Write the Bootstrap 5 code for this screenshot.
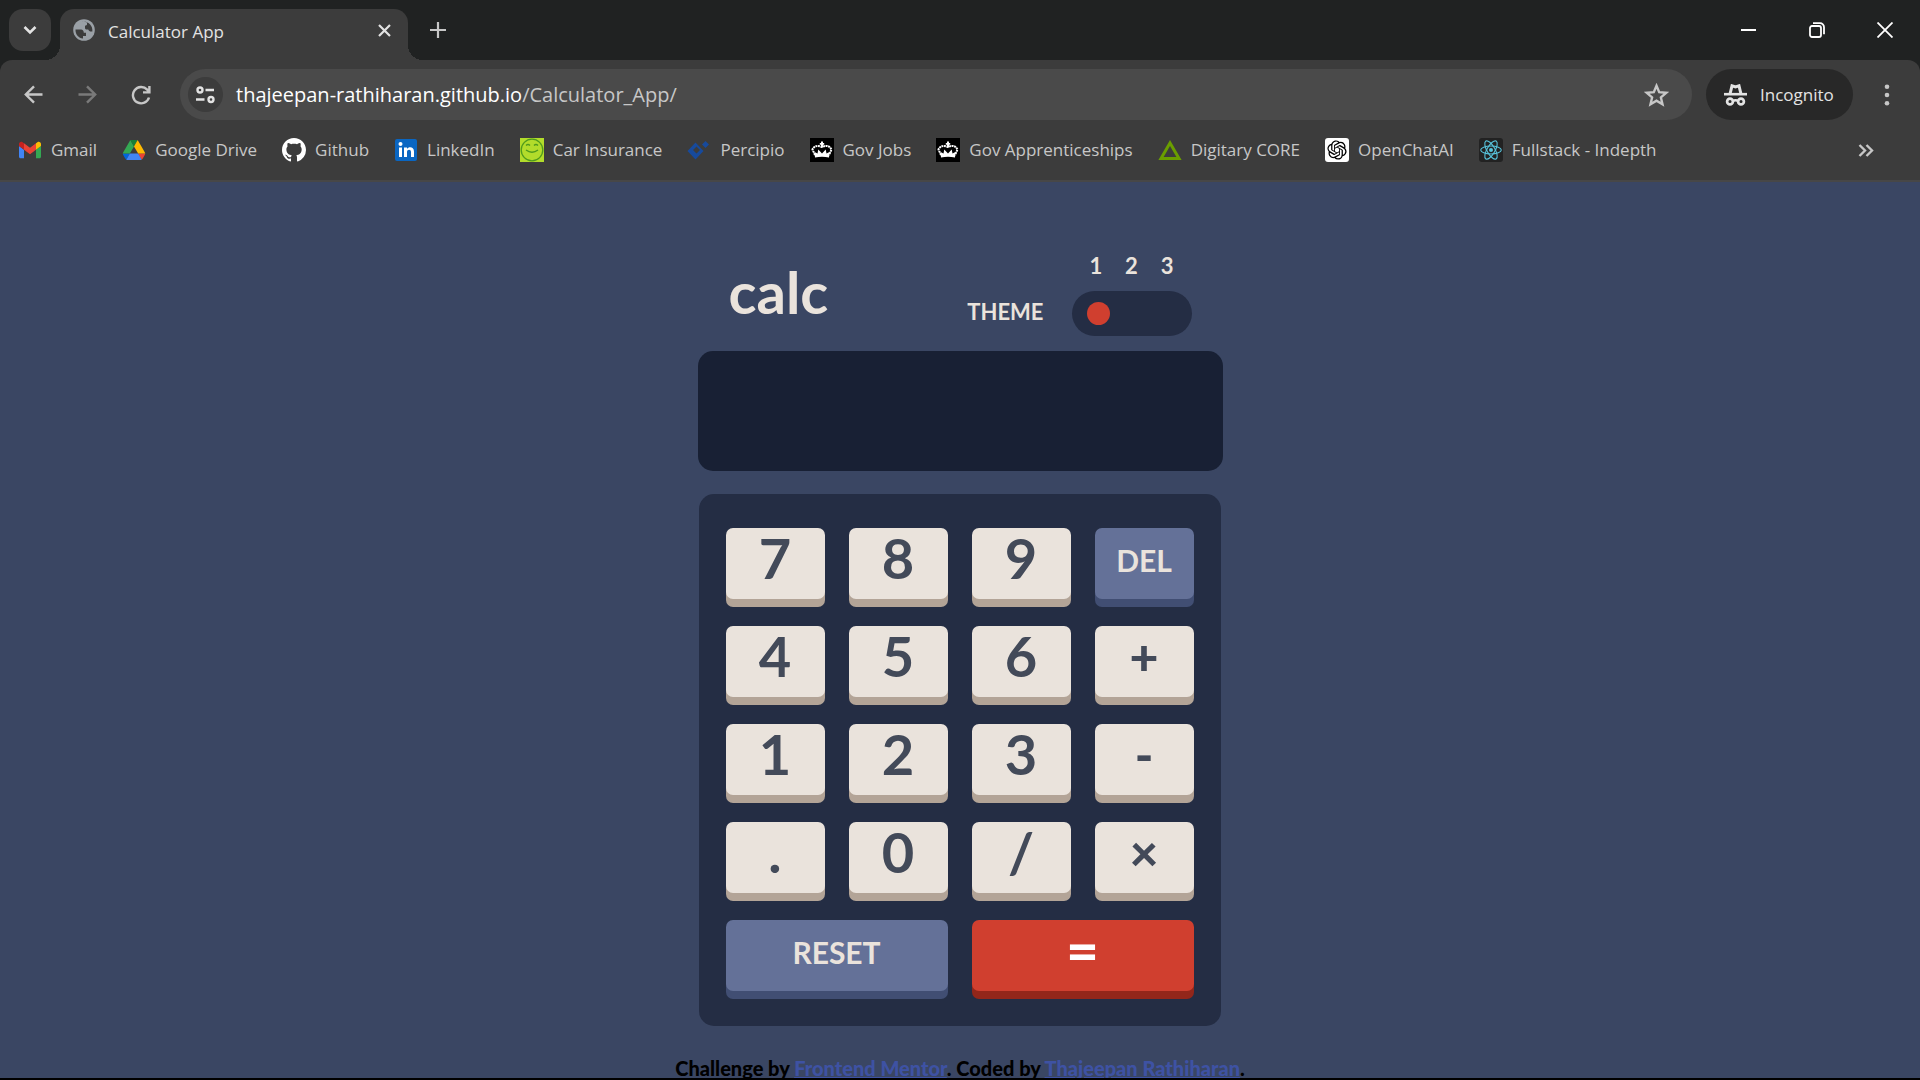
<!DOCTYPE html>
<html lang="en">
<head>
<meta charset="utf-8">
<meta name="viewport" content="width=device-width, initial-scale=1">
<title>Calculator App</title>
<link href="https://cdn.jsdelivr.net/npm/bootstrap@5.3.0/dist/css/bootstrap.min.css" rel="stylesheet">
<style>
  :root { --strip: #202222; --bar: #3c3c3c; --page: #3a4663; --pad: #242d44; --cream: #eae3dc; --slate: #434a59; }
  body { background: var(--page); font-family: "Open Sans", "Noto Sans", sans-serif; font-size: 17px; line-height: 24px; }
  svg { display: block; flex: none; }
  .plain-btn { background: none; border: 0; padding: 0; color: #c7c7c7; display: grid; place-items: center; flex: none; }

  /* tab strip */
  .tab-strip { background: var(--strip); height: 60px; padding: 9px 1px 0 9px; }
  .tab-search { width: 42px; height: 42px; border-radius: 14px; background: var(--bar); color: #e3e3e3; }
  .page-tab { position: relative; width: 348px; height: 51px; margin-left: 9px; padding: 0 16px 9px 13px; gap: 13px; background: var(--bar); border-radius: 14px 14px 0 0; color: #e3e3e3; }
  .page-tab::before, .page-tab::after { content: ""; position: absolute; bottom: 0; width: 15px; height: 15px; }
  .page-tab::before { right: 100%; background: radial-gradient(circle at 0 0, transparent 15px, var(--bar) 15px); }
  .page-tab::after { left: 100%; background: radial-gradient(circle at 100% 0, transparent 15px, var(--bar) 15px); }
  .tab-name { padding-top: 3px; }
  .new-tab { width: 42px; height: 42px; margin-left: 9px; }
  .win-btn { width: 68px; height: 42px; color: #fff; }

  /* toolbar */
  .bar-wrap { background: var(--strip); }
  .tool-bar { background: var(--bar); border-radius: 12px 12px 0 0; height: 60px; padding: 9px 0 0 6px; }
  .nav-btn { width: 54px; height: 51px; }
  .omnibox { height: 51px; margin-left: 12px; padding: 0 23px 0 8px; border-radius: 26px; background: #4a4a4a; }
  .site-info { width: 35px; height: 35px; border-radius: 50%; background: var(--bar); color: #e3e3e3; }
  .url-text { font-size: 20px; color: #c7c7c7; margin-left: 13px; }
  .url-text b { font-weight: 400; color: #fff; }
  .incog { height: 51px; width: 147px; margin-left: 14px; border-radius: 26px; background: #282828; color: #e3e3e3; padding-left: 18px; gap: 13px; }
  .menu-btn { width: 67px; height: 51px; }

  /* bookmarks */
  .bookmarks { background: var(--bar); height: 62px; padding: 0 46px 0 18px; gap: 25px; border-bottom: 2px solid #474747; }
  .bookmarks a { display: flex; align-items: center; gap: 9px; color: #c7c7c7; text-decoration: none; white-space: nowrap; }

  /* calculator */
  .calc-page { font-family: Lato, "Open Sans", sans-serif; font-weight: 700; padding-top: 72px; border-bottom: 2px solid #000; }
  .calc-box { width: 525px; }
  .calc-head { padding: 0 31px 15px; color: var(--cream); }
  .calc-title { font-size: 58px; line-height: 64px; font-weight: 700; margin: 0 0 12px; }
  .theme-word { font-size: 22px; line-height: 24px; margin: 0 28px 12px 0; }
  .theme-nums { font-size: 22px; line-height: 24px; padding: 0 18px; margin-bottom: 13px; }
  .theme-range { appearance: none; display: block; width: 120px; height: 45px; margin: 0; padding: 0 15px; border-radius: 23px; background: var(--pad); }
  .theme-range::-webkit-slider-thumb { appearance: none; width: 23px; height: 23px; border-radius: 50%; background: #d03f2f; }
  .calc-screen { display: block; width: 100%; height: 120px; border: 0; border-radius: 15px; background: #182034; color: #fff; padding: 0 30px; font-size: 56px; text-align: right; }
  .keypad { margin: 23px 2px 0 1px; padding: 34px 27px 35px; border-radius: 15px; background: var(--pad); display: grid; grid-template-columns: repeat(4, 1fr); gap: 27px 24px; }
  .key { height: 71px; padding: 0 0 11px; border: 0; border-radius: 7px; background: var(--cream); box-shadow: 0 8px 0 #b3a497; color: var(--slate); font-size: 56px; line-height: 60px; font-weight: 700; }
  .key-op { font-size: 50px; font-weight: 900; }
  .key-word { background: #647198; box-shadow: 0 8px 0 #414e73; color: var(--cream); font-size: 30px; line-height: 64px; padding-bottom: 7px; }
  .key-eq { background: #d03f2f; box-shadow: 0 8px 0 #93261a; color: #fff; font-weight: 900; }
  .key-wide { grid-column: span 2; }
  .credit { font-size: 20px; line-height: 24px; font-weight: 900; color: #000; margin-top: 30px; }
  .credit a { color: #3e52a3; }
</style>
<script src="https://cdn.jsdelivr.net/npm/bootstrap@5.3.0/dist/js/bootstrap.bundle.min.js"></script>
</head>
<body class="vh-100 d-flex flex-column overflow-hidden">

<header class="flex-shrink-0">
  <div class="tab-strip d-flex align-items-start">
    <button class="plain-btn tab-search" aria-label="Search tabs"><svg width="14" height="10" viewBox="0 0 14 10" fill="none" stroke="currentColor" stroke-width="2.6"><path d="M1.5 2 7 7.5 12.500 2"/></svg></button>
    <div class="page-tab d-flex align-items-center">
      <svg width="22" height="22" viewBox="0 0 22 22"><circle cx="11" cy="11" r="10.800" fill="#9aa0a6"/><path fill="#3c3c3c" d="M2.500 10.500h5.500c1.800 0 2.800 1.500 2.800 3.200h2.200v3.300h-3v2.500C5.600 19.200 2.300 15.500 2.500 10.500zM9 3c3-.8 5 0 5 0v2.200c0 1-1 1.400-2 1.500v2.200c0 1 1 1.600 2 1.600h1.200c.5 1.400 2 2.500 4.200 2 .6-6-4.400-10.500-10.400-9.500z"/></svg>
      <span class="tab-name">Calculator App</span>
      <button class="plain-btn ms-auto" aria-label="Close tab"><svg width="15" height="15" viewBox="0 0 15 15" stroke="#e3e3e3" stroke-width="2.2"><path d="m2 2 11 11M13 2 2 13"/></svg></button>
    </div>
    <button class="plain-btn new-tab" aria-label="New tab"><svg width="16" height="16" viewBox="0 0 16 16" stroke="currentColor" stroke-width="2.2"><path d="M8 0v16M0 8h16"/></svg></button>
    <div class="d-flex ms-auto">
      <button class="plain-btn win-btn" aria-label="Minimize"><svg width="16" height="16" viewBox="0 0 16 16" stroke="currentColor" stroke-width="2"><path d="M0 8h15"/></svg></button>
      <button class="plain-btn win-btn" aria-label="Restore"><svg width="16" height="16" viewBox="0 0 16 16" fill="none" stroke="currentColor" stroke-width="1.800"><rect x="1" y="4" width="11" height="11" rx="2"/><path d="M4 1.200h7a4 4 0 0 1 4 4v7"/></svg></button>
      <button class="plain-btn win-btn" aria-label="Close"><svg width="16" height="16" viewBox="0 0 16 16" stroke="currentColor" stroke-width="1.800"><path d="m.5.5 15 15M15.500.5l-15 15"/></svg></button>
    </div>
  </div>

  <div class="bar-wrap">
    <div class="tool-bar d-flex align-items-center">
      <button class="plain-btn nav-btn" aria-label="Back"><svg width="19" height="19" viewBox="0 0 19 19" fill="none" stroke="currentColor" stroke-width="2.400"><path d="M18.500 9.500H2M10 1.300 1.800 9.500 10 17.700"/></svg></button>
      <button class="plain-btn nav-btn" aria-label="Forward"><svg width="19" height="19" viewBox="0 0 19 19" fill="none" stroke="#7a7a7a" stroke-width="2.400"><path d="M.5 9.500H17M9 1.300l8.200 8.200L9 17.700"/></svg></button>
      <button class="plain-btn nav-btn" aria-label="Reload"><svg width="20" height="20" viewBox="0 0 20 20" fill="none" stroke="currentColor" stroke-width="2.400"><path d="M18 12.500A8.200 8.200 0 1 1 16.200 4.600L18.400 7M18.400 1v6.400H12"/></svg></button>
      <div class="omnibox d-flex align-items-center flex-grow-1">
        <button class="plain-btn site-info" aria-label="Site information"><svg width="19" height="18" viewBox="0 0 19 18" fill="none" stroke="currentColor" stroke-width="2.400"><circle cx="4" cy="4" r="2.500"/><path d="M9.500 4H18M0 13.500h8.500"/><circle cx="15" cy="13.500" r="2.500"/></svg></button>
        <span class="url-text"><b>thajeepan-rathiharan.github.io</b>/Calculator_App/</span>
        <button class="plain-btn ms-auto" aria-label="Bookmark this page"><svg width="25" height="24" viewBox="0 0 25 24" fill="none" stroke="currentColor" stroke-width="2.400"><path d="m12.500 2.800 2.700 6.400 7 .6-5.300 4.600 1.600 6.800-6-3.600-6 3.600 1.600-6.800-5.300-4.600 7-.6z"/></svg></button>
      </div>
      <div class="incog d-flex align-items-center">
        <svg width="23" height="22" viewBox="0 0 23 22" fill="none" stroke="currentColor"><path d="M0 10.200h23" stroke-width="2.600"/><path d="M6 10 8 1.800l3.500 1.200L15 1.800 17 10" stroke-width="3"/><circle cx="6" cy="17.500" r="2.900" stroke-width="2.700"/><circle cx="17" cy="17.500" r="2.900" stroke-width="2.700"/><path d="M8.500 17q3-1.500 6 0" stroke-width="2.600"/></svg>
        <span>Incognito</span>
      </div>
      <button class="plain-btn menu-btn" aria-label="Menu"><svg width="6" height="22" viewBox="0 0 6 22" fill="currentColor"><circle cx="3" cy="2.800" r="2.300"/><circle cx="3" cy="11" r="2.300"/><circle cx="3" cy="19.200" r="2.300"/></svg></button>
    </div>
  </div>

  <nav class="bookmarks d-flex align-items-center" aria-label="Bookmarks">
    <a href="#"><svg width="24" height="18" viewBox="48 42 96 66"><path fill="#4285f4" d="M58 108h14V74L52 59v43c0 3.320 2.690 6 6 6"/><path fill="#34a853" d="M120 108h14c3.320 0 6-2.690 6-6V59l-20 15"/><path fill="#fbbc04" d="M120 48v26l20-15v-8c0-7.420-8.470-11.650-14.400-7.200"/><path fill="#ea4335" d="M72 74V48l24 18 24-18v26L96 92"/><path fill="#c5221f" d="M52 51v8l20 15V48l-5.600-4.200c-5.940-4.450-14.400-.22-14.400 7.200"/></svg>Gmail</a>
    <a href="#"><svg width="24" height="20" viewBox="-2 0 91.300 78"><path fill="#0066da" d="m6.600 66.850 3.850 6.650c.8 1.400 1.950 2.500 3.300 3.300l13.750-23.800H0c0 1.550.4 3.100 1.200 4.500z"/><path fill="#34a853" d="M43.650 25 29.900 1.200c-1.350.8-2.500 1.900-3.300 3.300l-25.400 44A9.060 9.060 0 0 0 0 53h27.500z"/><path fill="#ea4335" d="M73.550 76.800c1.350-.8 2.500-1.900 3.300-3.300l1.600-2.750 7.650-13.250c.8-1.400 1.200-2.950 1.200-4.500H59.800l5.850 11.500z"/><path fill="#188038" d="M43.650 25 57.400 1.200C56.050.4 54.500 0 52.900 0H34.400c-1.600 0-3.150.45-4.500 1.200z"/><path fill="#4285f4" d="M59.800 53H27.500L13.750 76.800c1.350.8 2.900 1.200 4.500 1.200h50.800c1.600 0 3.150-.45 4.500-1.200z"/><path fill="#ffba00" d="m73.400 26.500-12.700-22c-.8-1.400-1.950-2.500-3.300-3.300L43.650 25l16.150 28h27.450c0-1.550-.4-3.100-1.200-4.500z"/></svg>Google Drive</a>
    <a href="#"><svg width="24" height="24" viewBox="0 0 16 16" fill="#fff"><path d="M8 0C3.580 0 0 3.580 0 8c0 3.540 2.290 6.530 5.470 7.590.4.070.55-.17.55-.38 0-.19-.01-.82-.01-1.490-2.010.37-2.530-.49-2.690-.94-.09-.23-.48-.94-.82-1.130-.28-.15-.68-.52-.01-.53.63-.01 1.080.58 1.230.82.72 1.210 1.870.87 2.330.66.07-.52.28-.87.51-1.070-1.780-.2-3.640-.89-3.640-3.950 0-.87.31-1.590.82-2.150-.08-.2-.36-1.020.08-2.120 0 0 .67-.21 2.200.82.64-.18 1.320-.27 2-.27s1.360.09 2 .27c1.530-1.040 2.200-.82 2.200-.82.44 1.100.16 1.920.08 2.120.51.56.82 1.270.82 2.150 0 3.070-1.870 3.750-3.650 3.950.29.25.54.73.54 1.480 0 1.070-.01 1.930-.01 2.200 0 .21.15.46.55.38A8.010 8.010 0 0 0 16 8c0-4.420-3.580-8-8-8"/></svg>Github</a>
    <a href="#"><svg width="24" height="22" viewBox="0 0 24 22"><rect x="1" width="22" height="22" rx="2" fill="#0a66c2"/><g fill="#fff"><circle cx="6.500" cy="5" r="2"/><path d="M5 8.500h3V18H5zM10 8.500h3V10c1.500-2.600 7-2.500 7 2.500V18h-3v-5c0-3-4-2.800-4 0v5h-3z"/></g></svg>LinkedIn</a>
    <a href="#"><svg width="24" height="24" viewBox="0 0 24 24" fill="none" stroke="#4f9a1c" stroke-width="1.300"><path fill="#b2dc2b" stroke="none" d="M0 0h24v24H0z"/><circle cx="12" cy="12" r="10.800"/><path d="M6 7.500q2-2 4 0M14 7.500q2-2 4 0M6 12q6 4.500 12 0"/></svg>Car Insurance</a>
    <a href="#"><svg width="24" height="20" viewBox="0 0 24 20"><path fill="#174a9c" fill-rule="evenodd" d="M8.500 2.500 16.500 11l-8 8.500L.5 11zM9.500 6.500 6 10l3.500 3.500L13 10zM18.500 1 22 4.500 18.500 8 15 4.500z"/></svg>Percipio</a>
    <a href="#"><svg width="24" height="24" viewBox="0 0 24 24"><path d="M0 0h24v24H0z"/><g id="crown"><path fill="none" stroke="#fff" stroke-width="2" stroke-dasharray="2 .6" d="M5 17 2.500 11.500Q5 6 12 9q7-3 9.500 2.500L19 17"/><path fill="#fff" d="M5 19.500 4.500 14l3 1.500.8-4 3.700 4 3.700-4 .8 4 3-1.500-.5 5.500q-7-1.500-14 0zM11 3.500h2V9h-2zM9.800 5h4.400v1.700H9.800z"/></g></svg>Gov Jobs</a>
    <a href="#"><svg width="24" height="24" viewBox="0 0 24 24"><path d="M0 0h24v24H0z"/><use href="#crown"/></svg>Gov Apprenticeships</a>
    <a href="#"><svg width="24" height="20" viewBox="0 0 24 20" fill="none" stroke="#6a9e00" stroke-width="3"><path d="M12 3 3 18.500h18z"/></svg>Digitary CORE</a>
    <a href="#"><svg width="24" height="24" viewBox="0 0 24 24"><rect width="24" height="24" rx="3" fill="#fff"/><path transform="translate(2.400 2.400) scale(.8)" d="M22.2819 9.8211a5.9847 5.9847 0 0 0-.5157-4.9108 6.0462 6.0462 0 0 0-6.5098-2.9A6.0651 6.0651 0 0 0 4.9807 4.1818a5.9847 5.9847 0 0 0-3.9977 2.9 6.0462 6.0462 0 0 0 .7427 7.0966 5.98 5.98 0 0 0 .511 4.9107 6.051 6.051 0 0 0 6.5146 2.9001A5.9847 5.9847 0 0 0 13.2599 24a6.0557 6.0557 0 0 0 5.7718-4.2058 5.9894 5.9894 0 0 0 3.9977-2.9001 6.0557 6.0557 0 0 0-.7475-7.0729zm-9.022 12.6081a4.4755 4.4755 0 0 1-2.8764-1.0408l.1419-.0804 4.7783-2.7582a.7948.7948 0 0 0 .3927-.6813v-6.7369l2.02 1.1686a.071.071 0 0 1 .038.052v5.5826a4.504 4.504 0 0 1-4.4945 4.4944zm-9.6607-4.1254a4.4708 4.4708 0 0 1-.5346-3.0137l.142.0852 4.783 2.7582a.7712.7712 0 0 0 .7806 0l5.8428-3.3685v2.3324a.0804.0804 0 0 1-.0332.0615L9.74 19.9502a4.4992 4.4992 0 0 1-6.1408-1.6464zM2.3408 7.8956a4.485 4.485 0 0 1 2.3655-1.9728V11.6a.7664.7664 0 0 0 .3879.6765l5.8144 3.3543-2.0201 1.1685a.0757.0757 0 0 1-.071 0l-4.8303-2.7865A4.504 4.504 0 0 1 2.3408 7.872zm16.5963 3.8558L13.1038 8.364 15.1192 7.2a.0757.0757 0 0 1 .071 0l4.8303 2.7913a4.4944 4.4944 0 0 1-.6765 8.1042v-5.6772a.79.79 0 0 0-.407-.667zm2.0107-3.0231l-.142-.0852-4.7735-2.7818a.7759.7759 0 0 0-.7854 0L9.409 9.2297V6.8974a.0662.0662 0 0 1 .0284-.0615l4.8303-2.7866a4.4992 4.4992 0 0 1 6.6802 4.66zM8.3065 12.863l-2.02-1.1638a.0804.0804 0 0 1-.038-.0567V6.0742a4.4992 4.4992 0 0 1 7.3757-3.4537l-.142.0805L8.704 5.459a.7948.7948 0 0 0-.3927.6813zm1.0976-2.3654l2.602-1.4998 2.6069 1.4998v2.9994l-2.5974 1.4997-2.6067-1.4997Z"/></svg>OpenChatAI</a>
    <a href="#"><svg width="24" height="24" viewBox="-12 -12 24 24" fill="none" stroke="#58c4dc" stroke-width="1.100"><rect x="-12" y="-12" width="24" height="24" rx="3" fill="#222" stroke="none"/><ellipse rx="10.300" ry="4"/><ellipse rx="10.300" ry="4" transform="rotate(60)"/><ellipse rx="10.300" ry="4" transform="rotate(120)"/><circle r="2" fill="#58c4dc" stroke="none"/></svg>Fullstack - Indepth</a>
    <button class="plain-btn ms-auto" aria-label="More bookmarks"><svg width="16" height="13" viewBox="0 0 16 13" fill="none" stroke="currentColor" stroke-width="2.400"><path d="m1.500 1 5.500 5.500L1.500 12M8.500 1 14 6.500 8.500 12"/></svg></button>
  </nav>
</header>

<main class="calc-page flex-grow-1 overflow-hidden d-flex flex-column align-items-center">
  <section class="calc-box flex-shrink-0">
    <div class="calc-head d-flex align-items-end">
      <h1 class="calc-title">calc</h1>
      <label class="theme-word ms-auto" for="theme">THEME</label>
      <div>
        <div class="theme-nums d-flex justify-content-between"><span>1</span><span>2</span><span>3</span></div>
        <input class="theme-range" id="theme" type="range" min="1" max="3" value="1">
      </div>
    </div>
    <input class="calc-screen" type="text" aria-label="Result" readonly>
    <div class="keypad">
      <button class="key">7</button><button class="key">8</button><button class="key">9</button><button class="key key-word">DEL</button>
      <button class="key">4</button><button class="key">5</button><button class="key">6</button><button class="key key-op">+</button>
      <button class="key">1</button><button class="key">2</button><button class="key">3</button><button class="key key-op">-</button>
      <button class="key">.</button><button class="key">0</button><button class="key">/</button><button class="key key-op">×</button>
      <button class="key key-word key-wide">RESET</button><button class="key key-eq key-wide">=</button>
    </div>
  </section>
  <footer class="credit flex-shrink-0">Challenge by <a href="#">Frontend Mentor</a>. Coded by <a href="#">Thajeepan Rathiharan</a>.</footer>
</main>
</body>
</html>
